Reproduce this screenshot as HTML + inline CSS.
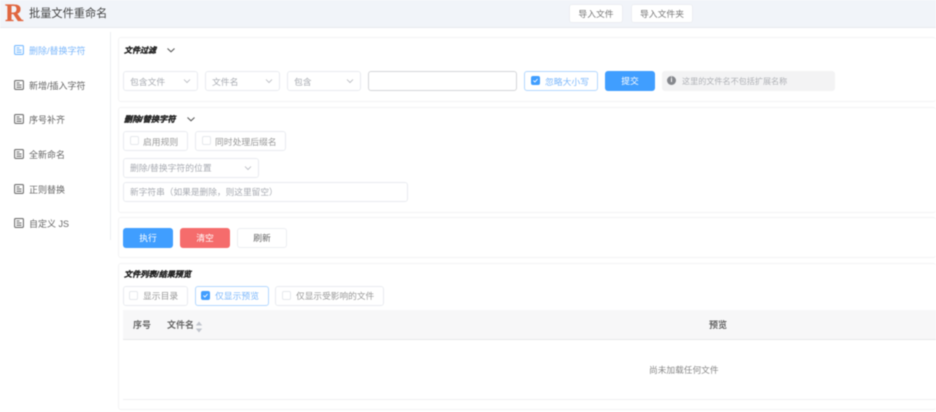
<!DOCTYPE html>
<html lang="zh">
<head>
<meta charset="utf-8">
<style>
html,body{margin:0;padding:0;background:#fff;}
#root{position:relative;width:936px;height:412px;overflow:hidden;background:#fff;font-family:"Liberation Sans","Noto Sans CJK SC",sans-serif;filter:blur(.55px);}
#root div,#root span.a,#root svg{position:absolute;box-sizing:border-box;}
.t{white-space:nowrap;line-height:14px;height:14px;margin-top:1px;}
.box{border:1px solid #e9ebf0;border-radius:3px;background:#fff;}
.card{border:1px solid #f3f3f4;border-radius:3px;background:#fff;border-right:0;}
.h{font-weight:700;font-style:italic;color:#222;-webkit-text-stroke:.35px #222;}
.g{font-size:8.8px;color:#a8abb2;}
.btn{border-radius:3px;text-align:center;line-height:19px;font-size:8.8px;}
.s{font-size:9px;color:#666;}
.cb{width:9px;height:9px;border:1px solid #e6e8ec;border-radius:2px;background:#fff;}
.cbon{width:9px;height:9px;border-radius:2px;background:#409eff;}
</style>
</head>
<body>
<div id="root">
  <!-- header -->
  <div style="left:0;top:0;width:936px;height:28px;background:#f1f4f9;border-bottom:1px solid #e8eaee;"></div>
  <div class="t" style="left:5px;top:0;height:26px;font:700 25px/26px 'Liberation Serif',serif;color:#e0663f;-webkit-text-stroke:.3px #e0663f;">R</div>
  <div class="t" style="left:29px;top:6px;font-size:11.2px;color:#444;">批量文件重命名</div>
  <div class="btn" style="left:569px;top:4px;width:54px;height:19px;background:#fff;border:1px solid #eceef2;color:#777;">导入文件</div>
  <div class="btn" style="left:631px;top:4px;width:62px;height:19px;background:#fff;border:1px solid #eceef2;color:#777;">导入文件夹</div>

  <!-- sidebar -->
  <div style="left:110px;top:32px;width:1px;height:208px;background:#eceef1;"></div>

  <svg style="left:14px;top:45px" width="10" height="10" viewBox="0 0 10 10" fill="none" stroke="#79bbff" stroke-width="1.1"><rect x=".6" y=".6" width="8.8" height="8.8" rx="1"/><path d="M2.5 3h3M2.5 5h5M2.5 7.2h5"/></svg>
  <div class="t s" style="left:29px;top:43px;color:#7db8fb;">删除/替换字符</div>

  <svg style="left:14px;top:80px" width="10" height="10" viewBox="0 0 10 10" fill="none" stroke="#707070" stroke-width="1.1"><rect x=".6" y=".6" width="8.8" height="8.8" rx="1"/><path d="M2.5 3h3M2.5 5h5M2.5 7.2h5"/></svg>
  <div class="t s" style="left:29px;top:78px;">新增/插入字符</div>

  <svg style="left:14px;top:114px" width="10" height="10" viewBox="0 0 10 10" fill="none" stroke="#707070" stroke-width="1.1"><rect x=".6" y=".6" width="8.8" height="8.8" rx="1"/><path d="M2.5 3h3M2.5 5h5M2.5 7.2h5"/></svg>
  <div class="t s" style="left:29px;top:112px;">序号补齐</div>

  <svg style="left:14px;top:149px" width="10" height="10" viewBox="0 0 10 10" fill="none" stroke="#707070" stroke-width="1.1"><rect x=".6" y=".6" width="8.8" height="8.8" rx="1"/><path d="M2.5 3h3M2.5 5h5M2.5 7.2h5"/></svg>
  <div class="t s" style="left:29px;top:147px;">全新命名</div>

  <svg style="left:14px;top:184px" width="10" height="10" viewBox="0 0 10 10" fill="none" stroke="#707070" stroke-width="1.1"><rect x=".6" y=".6" width="8.8" height="8.8" rx="1"/><path d="M2.5 3h3M2.5 5h5M2.5 7.2h5"/></svg>
  <div class="t s" style="left:29px;top:182px;">正则替换</div>

  <svg style="left:14px;top:218px" width="10" height="10" viewBox="0 0 10 10" fill="none" stroke="#707070" stroke-width="1.1"><rect x=".6" y=".6" width="8.8" height="8.8" rx="1"/><path d="M2.5 3h3M2.5 5h5M2.5 7.2h5"/></svg>
  <div class="t s" style="left:29px;top:216px;">自定义 JS</div>

  <!-- card 1 -->
  <div class="card" style="left:118px;top:37px;width:818px;height:65px;"></div>
  <div class="t h" style="left:124px;top:43px;font-size:8px;">文件过滤</div>
  <svg style="left:165px;top:44px" width="12" height="12" viewBox="0 0 12 12" fill="none" stroke="#555" stroke-width="1"><path d="M2.5 4.5 6 7.8 9.5 4.5"/></svg>

  <div class="box" style="left:123px;top:71px;width:75px;height:20px;"></div>
  <div class="t g" style="left:130px;top:74px;">包含文件</div>
  <svg style="left:183px;top:78px" width="8" height="6" viewBox="0 0 8 6" fill="none" stroke="#b4b7bd" stroke-width=".8"><path d="M1 1.5 4 4.5 7 1.5"/></svg>

  <div class="box" style="left:205px;top:71px;width:75px;height:20px;"></div>
  <div class="t g" style="left:212px;top:74px;">文件名</div>
  <svg style="left:265px;top:78px" width="8" height="6" viewBox="0 0 8 6" fill="none" stroke="#b4b7bd" stroke-width=".8"><path d="M1 1.5 4 4.5 7 1.5"/></svg>

  <div class="box" style="left:287px;top:71px;width:74px;height:20px;"></div>
  <div class="t g" style="left:294px;top:74px;">包含</div>
  <svg style="left:346px;top:78px" width="8" height="6" viewBox="0 0 8 6" fill="none" stroke="#b4b7bd" stroke-width=".8"><path d="M1 1.5 4 4.5 7 1.5"/></svg>

  <div class="box" style="left:368px;top:71px;width:149px;height:20px;border-color:#d5d6d9;"></div>

  <div class="box" style="left:524px;top:71px;width:74px;height:20px;border-color:#b3d8ff;"></div>
  <div class="cbon" style="left:531px;top:76px;"></div>
  <svg style="left:531px;top:76px" width="9" height="9" viewBox="0 0 9 9" fill="none" stroke="#fff" stroke-width=".9"><path d="M2.4 4.6 3.9 6 6.6 3"/></svg>
  <div class="t" style="left:545px;top:74px;font-size:8.8px;color:#7db8fb;">忽略大小写</div>

  <div class="btn" style="left:605px;top:71px;width:50px;height:20px;background:#409eff;color:#fff;line-height:21px;">提交</div>

  <div style="left:662px;top:71px;width:173px;height:20px;background:#f3f3f4;border-radius:3px;"></div>
  <div style="left:667px;top:76px;width:9px;height:9px;border-radius:50%;background:#85878c;"></div>
  <div class="t" style="left:667px;top:74px;width:9px;height:12px;line-height:12px;text-align:center;font-size:7px;font-weight:700;color:#fff;">i</div>
  <div class="t" style="left:682px;top:74px;font-size:8.1px;color:#aeb0b5;">这里的文件名不包括扩展名称</div>

  <!-- card 2 -->
  <div class="card" style="left:118px;top:107px;width:818px;height:106px;"></div>
  <div class="t h" style="left:124px;top:112px;font-size:8.2px;">删除/替换字符</div>
  <svg style="left:185px;top:113px" width="12" height="12" viewBox="0 0 12 12" fill="none" stroke="#555" stroke-width="1"><path d="M2.5 4.5 6 7.8 9.5 4.5"/></svg>

  <div class="box" style="left:123px;top:131px;width:65px;height:20px;"></div>
  <div class="cb" style="left:130px;top:136px;"></div>
  <div class="t g" style="left:143px;top:134px;color:#999;">启用规则</div>

  <div class="box" style="left:195px;top:131px;width:91px;height:20px;"></div>
  <div class="cb" style="left:202px;top:136px;"></div>
  <div class="t g" style="left:215px;top:134px;color:#999;">同时处理后缀名</div>

  <div class="box" style="left:123px;top:158px;width:136px;height:20px;"></div>
  <div class="t g" style="left:130px;top:160px;">删除/替换字符的位置</div>
  <svg style="left:244px;top:165px" width="8" height="6" viewBox="0 0 8 6" fill="none" stroke="#b4b7bd" stroke-width=".8"><path d="M1 1.5 4 4.5 7 1.5"/></svg>

  <div class="box" style="left:123px;top:182px;width:285px;height:20px;"></div>
  <div class="t g" style="left:130px;top:184px;font-size:8.7px;">新字符串（如果是删除，则这里留空）</div>

  <!-- card 3 -->
  <div class="card" style="left:118px;top:217px;width:818px;height:41px;"></div>
  <div class="btn" style="left:123px;top:228px;width:50px;height:20px;background:#409eff;color:#fff;line-height:21px;">执行</div>
  <div class="btn" style="left:180px;top:228px;width:50px;height:20px;background:#f56c6c;color:#fff;line-height:21px;">清空</div>
  <div class="btn" style="left:237px;top:228px;width:50px;height:20px;background:#fff;border:1px solid #eceef2;color:#666;">刷新</div>

  <!-- card 4 -->
  <div class="card" style="left:118px;top:263px;width:818px;height:147px;"></div>
  <div class="t h" style="left:124px;top:267px;font-size:8.1px;">文件列表/结果预览</div>

  <div class="box" style="left:123px;top:286px;width:65px;height:20px;"></div>
  <div class="cb" style="left:129px;top:291px;"></div>
  <div class="t g" style="left:143px;top:288px;color:#999;">显示目录</div>

  <div class="box" style="left:195px;top:286px;width:74px;height:20px;border-color:#b3d8ff;"></div>
  <div class="cbon" style="left:201px;top:291px;"></div>
  <svg style="left:201px;top:291px" width="9" height="9" viewBox="0 0 9 9" fill="none" stroke="#fff" stroke-width=".9"><path d="M2.4 4.6 3.9 6 6.6 3"/></svg>
  <div class="t" style="left:215px;top:288px;font-size:8.8px;color:#7db8fb;">仅显示预览</div>

  <div class="box" style="left:275px;top:286px;width:109px;height:20px;"></div>
  <div class="cb" style="left:282px;top:291px;"></div>
  <div class="t g" style="left:296px;top:288px;color:#999;font-size:8.7px;">仅显示受影响的文件</div>

  <div style="left:123px;top:310px;width:813px;height:30px;background:#f7f7f8;border-bottom:1px solid #e7e8ea;"></div>
  <div class="t" style="left:133px;top:317px;font-size:9px;font-weight:700;color:#666;">序号</div>
  <div class="t" style="left:167px;top:317px;font-size:9px;font-weight:700;color:#666;">文件名</div>
  <svg style="left:195px;top:321px" width="8" height="12" viewBox="0 0 8 12" fill="#c0c4cc"><path d="M4 .5 7.2 4.5H.8Z"/><path d="M4 11.5 7.2 7.5H.8Z"/></svg>
  <div class="t" style="left:709px;top:317px;font-size:9px;font-weight:700;color:#666;">预览</div>

  <div class="t" style="left:649px;top:362px;font-size:8.7px;color:#888;">尚未加载任何文件</div>
  <div style="left:123px;top:399px;width:813px;height:1px;background:#f0f0f2;"></div>
</div>
</body>
</html>
